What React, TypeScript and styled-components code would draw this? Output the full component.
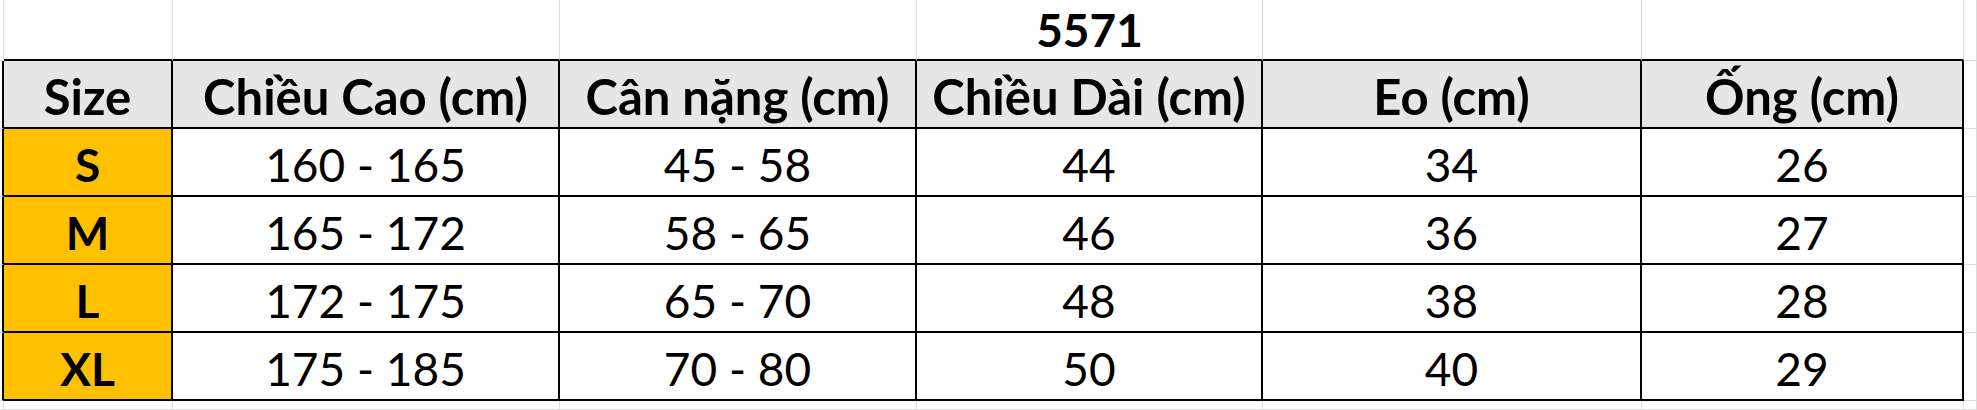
import React from 'react';
import styled, { createGlobalStyle } from 'styled-components';

const GlobalStyle = createGlobalStyle`
	html, body {
		margin: 0;
		padding: 0;
		background: #ffffff;
	}

	* {
		box-sizing: border-box;
	}
`;

interface SizeRow {
	size: string;
	height: string;
	weight: string;
	length: string;
	waist: string;
	leg: string;
}

const headers = ['Size', 'Chiều Cao (cm)', 'Cân nặng (cm)', 'Chiều Dài (cm)', 'Eo (cm)', 'Ống (cm)'];

const rows: SizeRow[] = [
	{ size: 'S', height: '160 - 165', weight: '45 - 58', length: '44', waist: '34', leg: '26' },
	{ size: 'M', height: '165 - 172', weight: '58 - 65', length: '46', waist: '36', leg: '27' },
	{ size: 'L', height: '172 - 175', weight: '65 - 70', length: '48', waist: '38', leg: '28' },
	{ size: 'XL', height: '175 - 185', weight: '70 - 80', length: '50', waist: '40', leg: '29' }
];

const TITLE_COLUMN = 3;

type Kind = 'blank' | 'head' | 'size' | 'data';

interface CellProps {
	$kind: Kind;
	$edgeRight?: boolean;
	$edgeBottom?: boolean;
}

const background: Record<Kind, string> = {
	blank: '#ffffff',
	head: '#e7e6e6',
	size: '#ffc000',
	data: '#ffffff'
};

export default function App() {
	const tableCols = headers.length;

	return (
		<>
			<GlobalStyle />
			<Sheet>
				{/* title row above the table */}
				<Cell $kind="blank" />
				{headers.map((h, i) => (
					<Cell key={`t-${h}`} $kind="blank" $edgeBottom>
						{i === TITLE_COLUMN ? <Title>5571</Title> : null}
					</Cell>
				))}
				<Cell $kind="blank" />

				<Cell $kind="blank" $edgeRight />
				{headers.map((h) => (
					<Cell key={h} $kind="head" $edgeRight $edgeBottom>
						<HeadText>{h}</HeadText>
					</Cell>
				))}
				<Cell $kind="blank" />

				{rows.map((r) => (
					<React.Fragment key={r.size}>
						<Cell $kind="blank" $edgeRight />
						<Cell $kind="size" $edgeRight $edgeBottom>
							<SizeText>{r.size}</SizeText>
						</Cell>
						{[r.height, r.weight, r.length, r.waist, r.leg].map((v, i) => (
							<Cell key={i} $kind="data" $edgeRight $edgeBottom>
								<DataText>{v}</DataText>
							</Cell>
						))}
						<Cell $kind="blank" />
					</React.Fragment>
				))}

				{/* empty sheet row under the table */}
				{Array.from({ length: tableCols + 2 }).map((_, i) => (
					<Cell key={`b${i}`} $kind="blank" />
				))}
			</Sheet>
		</>
	);
}

const Sheet = styled.div`
	display: grid;
	grid-template-columns: 4px 169px 387px 357px 346px 379px 322px 1fr;
	grid-template-rows: 61px repeat(5, 68px) 1fr;
	width: 100%;
	height: 410px;
	overflow: hidden;
	font-family: Lato, 'Noto Sans', sans-serif;
	color: #000000;
`;

const Cell = styled.div<CellProps>`
	display: flex;
	align-items: center;
	justify-content: center;
	padding-top: ${({ $kind }) => ($kind === 'blank' ? '0' : '5px')};
	min-width: 0;
	background: ${({ $kind }) => background[$kind]};
	border-right: ${({ $edgeRight }) => ($edgeRight ? '2px solid #000000' : '1px solid #dcdcdc')};
	border-bottom: ${({ $edgeBottom }) => ($edgeBottom ? '2px solid #000000' : '1px solid #dcdcdc')};
	white-space: nowrap;
`;

const Title = styled.span`
	font-size: 46px;
	font-weight: 700;
	line-height: 1;
`;

const HeadText = styled.span`
	font-size: 49px;
	font-weight: 700;
	line-height: 1;
`;

const SizeText = styled.span`
	font-size: 46px;
	font-weight: 700;
	line-height: 1;
`;

const DataText = styled.span`
	font-size: 46px;
	font-weight: 400;
	line-height: 1;
`;
